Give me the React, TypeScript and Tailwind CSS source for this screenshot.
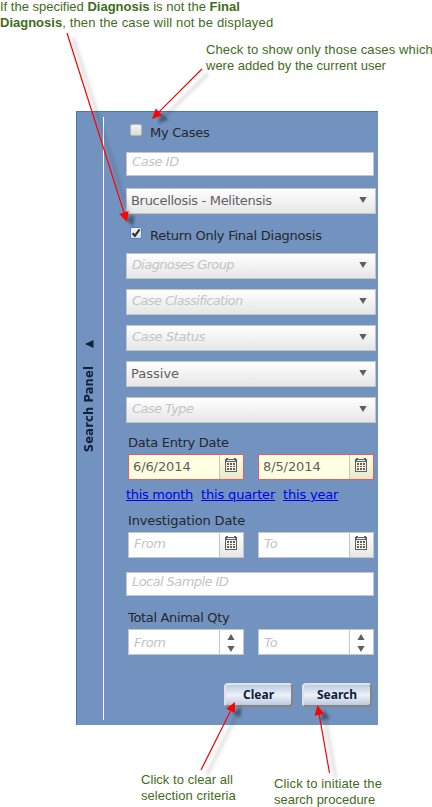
import React from "react";

const selects = [
  { text: "Diagnoses Group", hint: true, cls: "tracking-[-0.65px]" },
  { text: "Case Classification", hint: true, cls: "tracking-[-0.6px]" },
  { text: "Case Status", hint: true, cls: "tracking-[-0.4px]" },
  { text: "Passive", hint: false, cls: "" },
  { text: "Case Type", hint: true, cls: "tracking-[-0.6px]" },
];

function Select({ text, hint, cls }: { text: string; hint: boolean; cls: string }) {
  return (
    <div className="flex h-[26px] w-[250px] shrink-0 items-center justify-between border border-[#c5c5c5] bg-linear-to-b from-white to-[#e6e6e6] pr-[8px]">
      <span className={`${hint ? "pl-[5px] pb-[3px] italic text-[#c4c4c4]" : "pl-[4px] text-[#606060]"} ${cls}`}>{text}</span>
      <svg className="mb-[3px]" width="8" height="6" viewBox="0 0 8 6"><path d="M0.3 0h7.4L4 6z" fill="#606060" /></svg>
    </div>
  );
}

function Calendar() {
  return (
    <svg width="12" height="14" viewBox="0 0 12 14" shapeRendering="crispEdges">
      <path d="M0 1h12v13H0z" fill="#606060" />
      <path d="M1 0h2v1H1zM9 0h2v1H9z" fill="#606060" />
      <path d="M1 4h10v9H1zM2 2h8v1H2z" fill="#f3f3e8" />
      <path d="M2 5h2v2H2zM5 5h2v2H5zM8 5h2v2H8zM2 8h2v1H2zM5 8h2v1H5zM8 8h2v1H8zM2 10h2v2H2zM5 10h2v2H5zM8 10h2v2H8z" fill="#606060" />
    </svg>
  );
}

function Field({ text, filled, spin }: { text: string; filled?: boolean; spin?: boolean }) {
  return (
    <div className={`flex h-[26px] w-[116px] border ${filled ? "border-[#ec5a62] bg-[#ffffe1]" : "border-[#c5c5c5] bg-white"}`}>
      <div className={`flex w-[90px] items-center ${filled ? "pl-[4px] tracking-[-0.1px] text-[#606060]" : "pl-[5px] italic tracking-[-0.5px] text-[#c4c4c4]"} ${!filled && !spin ? "pb-[3px]" : ""} ${spin ? "pt-[2px]" : ""}`}>{text}</div>
      <div className={`flex flex-1 justify-center border-l border-[#c5c5c5] pr-[1px] ${spin ? "items-center" : filled ? "items-start bg-linear-to-b from-[#ffffe1] to-[#e8e8cc] pt-[3px]" : "items-start bg-linear-to-b from-white to-[#e6e6e6] pt-[3px]"}`}>
        {spin ? (
          <svg className="mt-[1px]" width="8" height="18" viewBox="0 0 8 18"><path d="M4 0l3.6 6H.4zM.4 12h7.2L4 18z" fill="#606060" /></svg>
        ) : <Calendar />}
      </div>
    </div>
  );
}

function Pair({ a, b, filled, spin }: { a: string; b: string; filled?: boolean; spin?: boolean }) {
  return (
    <div className="ml-[2px] flex shrink-0 gap-[14px]">
      <Field text={a} filled={filled} spin={spin} />
      <Field text={b} filled={filled} spin={spin} />
    </div>
  );
}

function Check({ on }: { on?: boolean }) {
  return (
    <div className={`h-[12px] w-[12px] rounded-[2px] border bg-linear-to-b from-[#f2f2f2] to-[#dcdcdc] ${on ? "border-[#4f82d6]" : "border-[#b5b5b5]"}`}>
      {on && <svg width="10" height="10" viewBox="0 0 10 10"><path d="M1.5 5.2l2.4 2.6L8.6 1.4" fill="none" stroke="#303030" strokeWidth="2.1" /></svg>}
    </div>
  );
}

function Button({ text, cls }: { text: string; cls: string }) {
  return (
    <div className={`flex h-[24px] items-center justify-center rounded-[4px] border-2 border-t-[#e2e2e2] border-l-[#e2e2e2] border-r-[#858585] border-b-[#858585] bg-linear-to-b from-[#bccbe1] via-[#edf1f8] to-[#bccbe1] font-['Noto_Sans',sans-serif] text-[12px] font-bold text-[#10203d] ${cls}`}>{text}</div>
  );
}

// Each callout line runs from its caption to an arrow head.
const arrows = [
  { x1: 67, y1: 33, x2: 127, y2: 222 },
  { x1: 202, y1: 69, x2: 152, y2: 119 },
  { x1: 201, y1: 770, x2: 235, y2: 702 },
  { x1: 329.5, y1: 773, x2: 317.5, y2: 705 },
];

function Arrow({ x1, y1, x2, y2 }: { x1: number; y1: number; x2: number; y2: number }) {
  const d = Math.hypot(x2 - x1, y2 - y1);
  const ux = (x2 - x1) / d;
  const uy = (y2 - y1) / d;
  const bx = x2 - ux * 10;
  const by = y2 - uy * 10;
  const head = `${x2},${y2} ${bx - uy * 4.8},${by + ux * 4.8} ${bx + uy * 4.8},${by - ux * 4.8}`;
  return (
    <g>
      <g transform="translate(6 4.5)" filter="url(#soft)">
        <line x1={x1} y1={y1} x2={bx} y2={by} stroke="#000" strokeOpacity=".1" strokeWidth="4" />
        <polygon points={head} fill="#000" fillOpacity=".4" />
      </g>
      <line x1={x1} y1={y1} x2={bx} y2={by} stroke="#f00" strokeWidth="1.2" />
      <polygon points={head} fill="#f00" />
    </g>
  );
}

export default function App() {
  return (
    <div className="relative h-[807px] w-[432px] bg-white font-['Liberation_Sans',Arial,sans-serif] text-[13px] leading-[16px] text-[#3f6c1c]">
      <header className="flow-root h-[111px] whitespace-nowrap">
        <p className="-mt-[1px]">If the specified <b>Diagnosis</b> is not the <b>Final</b><br /><b>Diagnosis</b><span className="tracking-[0.16px]">, then the case will not be displayed</span></p>
        <p className="mt-[11px] ml-[206px]"><span className="tracking-[0.12px]">Check to show only those cases which</span><br />were added by the current user</p>
      </header>
      <main className="ml-[76px] flex h-[614px] w-[302px] border-t border-l border-[#4478b5] bg-[#7293bf] font-['DejaVu_Sans',Verdana,sans-serif] text-[13px] text-[#26262c]">
        <aside className="mt-[5px] mb-[5px] flex w-[27px] shrink-0 flex-col items-center border-r border-white pr-[2px]">
          <svg className="mt-[223px]" width="9" height="8" viewBox="0 0 9 8"><path d="M0 4L8.5 0v8z" fill="#10203d" /></svg>
          <span className="mt-[18px] rotate-180 text-[11.5px] font-bold tracking-[0.15px] whitespace-nowrap text-[#10203d] [writing-mode:vertical-rl]">Search Panel</span>
        </aside>
        <section className="ml-[22px] flex w-[250px] shrink-0 flex-col whitespace-nowrap">
          <div className="flex h-[40px] shrink-0 gap-[8px] pt-[12px] pl-[4px]"><Check /><span className="mt-[1px] tracking-[-0.25px]">My Cases</span></div>
          <div className="flex h-[24px] w-[248px] shrink-0 items-center border border-[#c5c5c5] bg-white pb-[4px] pl-[5px] tracking-[-0.43px] italic text-[#c4c4c4]">Case ID</div>
          <div className="mt-[12px]"><Select text="Brucellosis - Melitensis" hint={false} cls="tracking-[-0.3px]" /></div>
          <div className="flex h-[39px] shrink-0 gap-[8px] pt-[13px] pl-[4px]"><Check on /><span className="mt-[1px] tracking-[-0.25px]">Return Only Final Diagnosis</span></div>
          <div className="flex shrink-0 flex-col gap-[10px]">
            {selects.map((s) => <Select key={s.text} {...s} />)}
          </div>
          <div className="h-[31px] shrink-0 pt-[12px] pl-[2px] tracking-[-0.28px]">Data Entry Date</div>
          <Pair a="6/6/2014" b="8/5/2014" filled />
          <div className="flex h-[30px] shrink-0 items-center gap-[8px] text-[#0000ee]"><span className="tracking-[-0.3px] underline">this month</span><span className="tracking-[-0.17px] underline">this quarter</span><span className="tracking-[-0.2px] underline">this year</span></div>
          <div className="h-[22px] shrink-0 pt-[3px] pl-[2px] tracking-[-0.14px]">Investigation Date</div>
          <Pair a="From" b="To" />
          <div className="mt-[14px] flex h-[24px] w-[248px] shrink-0 items-center border border-[#c5c5c5] bg-white pb-[4px] pl-[5px] tracking-[-0.58px] italic text-[#c4c4c4]">Local Sample ID</div>
          <div className="h-[33px] shrink-0 pt-[14px] pl-[2px] tracking-[-0.33px]">Total Animal Qty</div>
          <Pair a="From" b="To" spin />
          <div className="mt-[28px] ml-[98px] flex gap-[9px]"><Button text="Clear" cls="w-[69px]" /><Button text="Search" cls="w-[70px]" /></div>
        </section>
      </main>
      <footer className="flex items-start whitespace-nowrap">
        <p className="mt-[47px] ml-[141px] w-[133px] tracking-[0.05px]">Click to clear all<br />selection criteria</p>
        <p className="mt-[51px]"><span className="tracking-[0.12px]">Click to initiate the</span><br />search procedure</p>
      </footer>
      <svg className="pointer-events-none absolute inset-0" width="432" height="807" viewBox="0 0 432 807">
        <defs><filter id="soft" x="-50%" y="-50%" width="200%" height="200%"><feGaussianBlur stdDeviation="1.5" /></filter></defs>
        {arrows.map((a) => <Arrow key={a.x1} {...a} />)}
      </svg>
    </div>
  );
}
